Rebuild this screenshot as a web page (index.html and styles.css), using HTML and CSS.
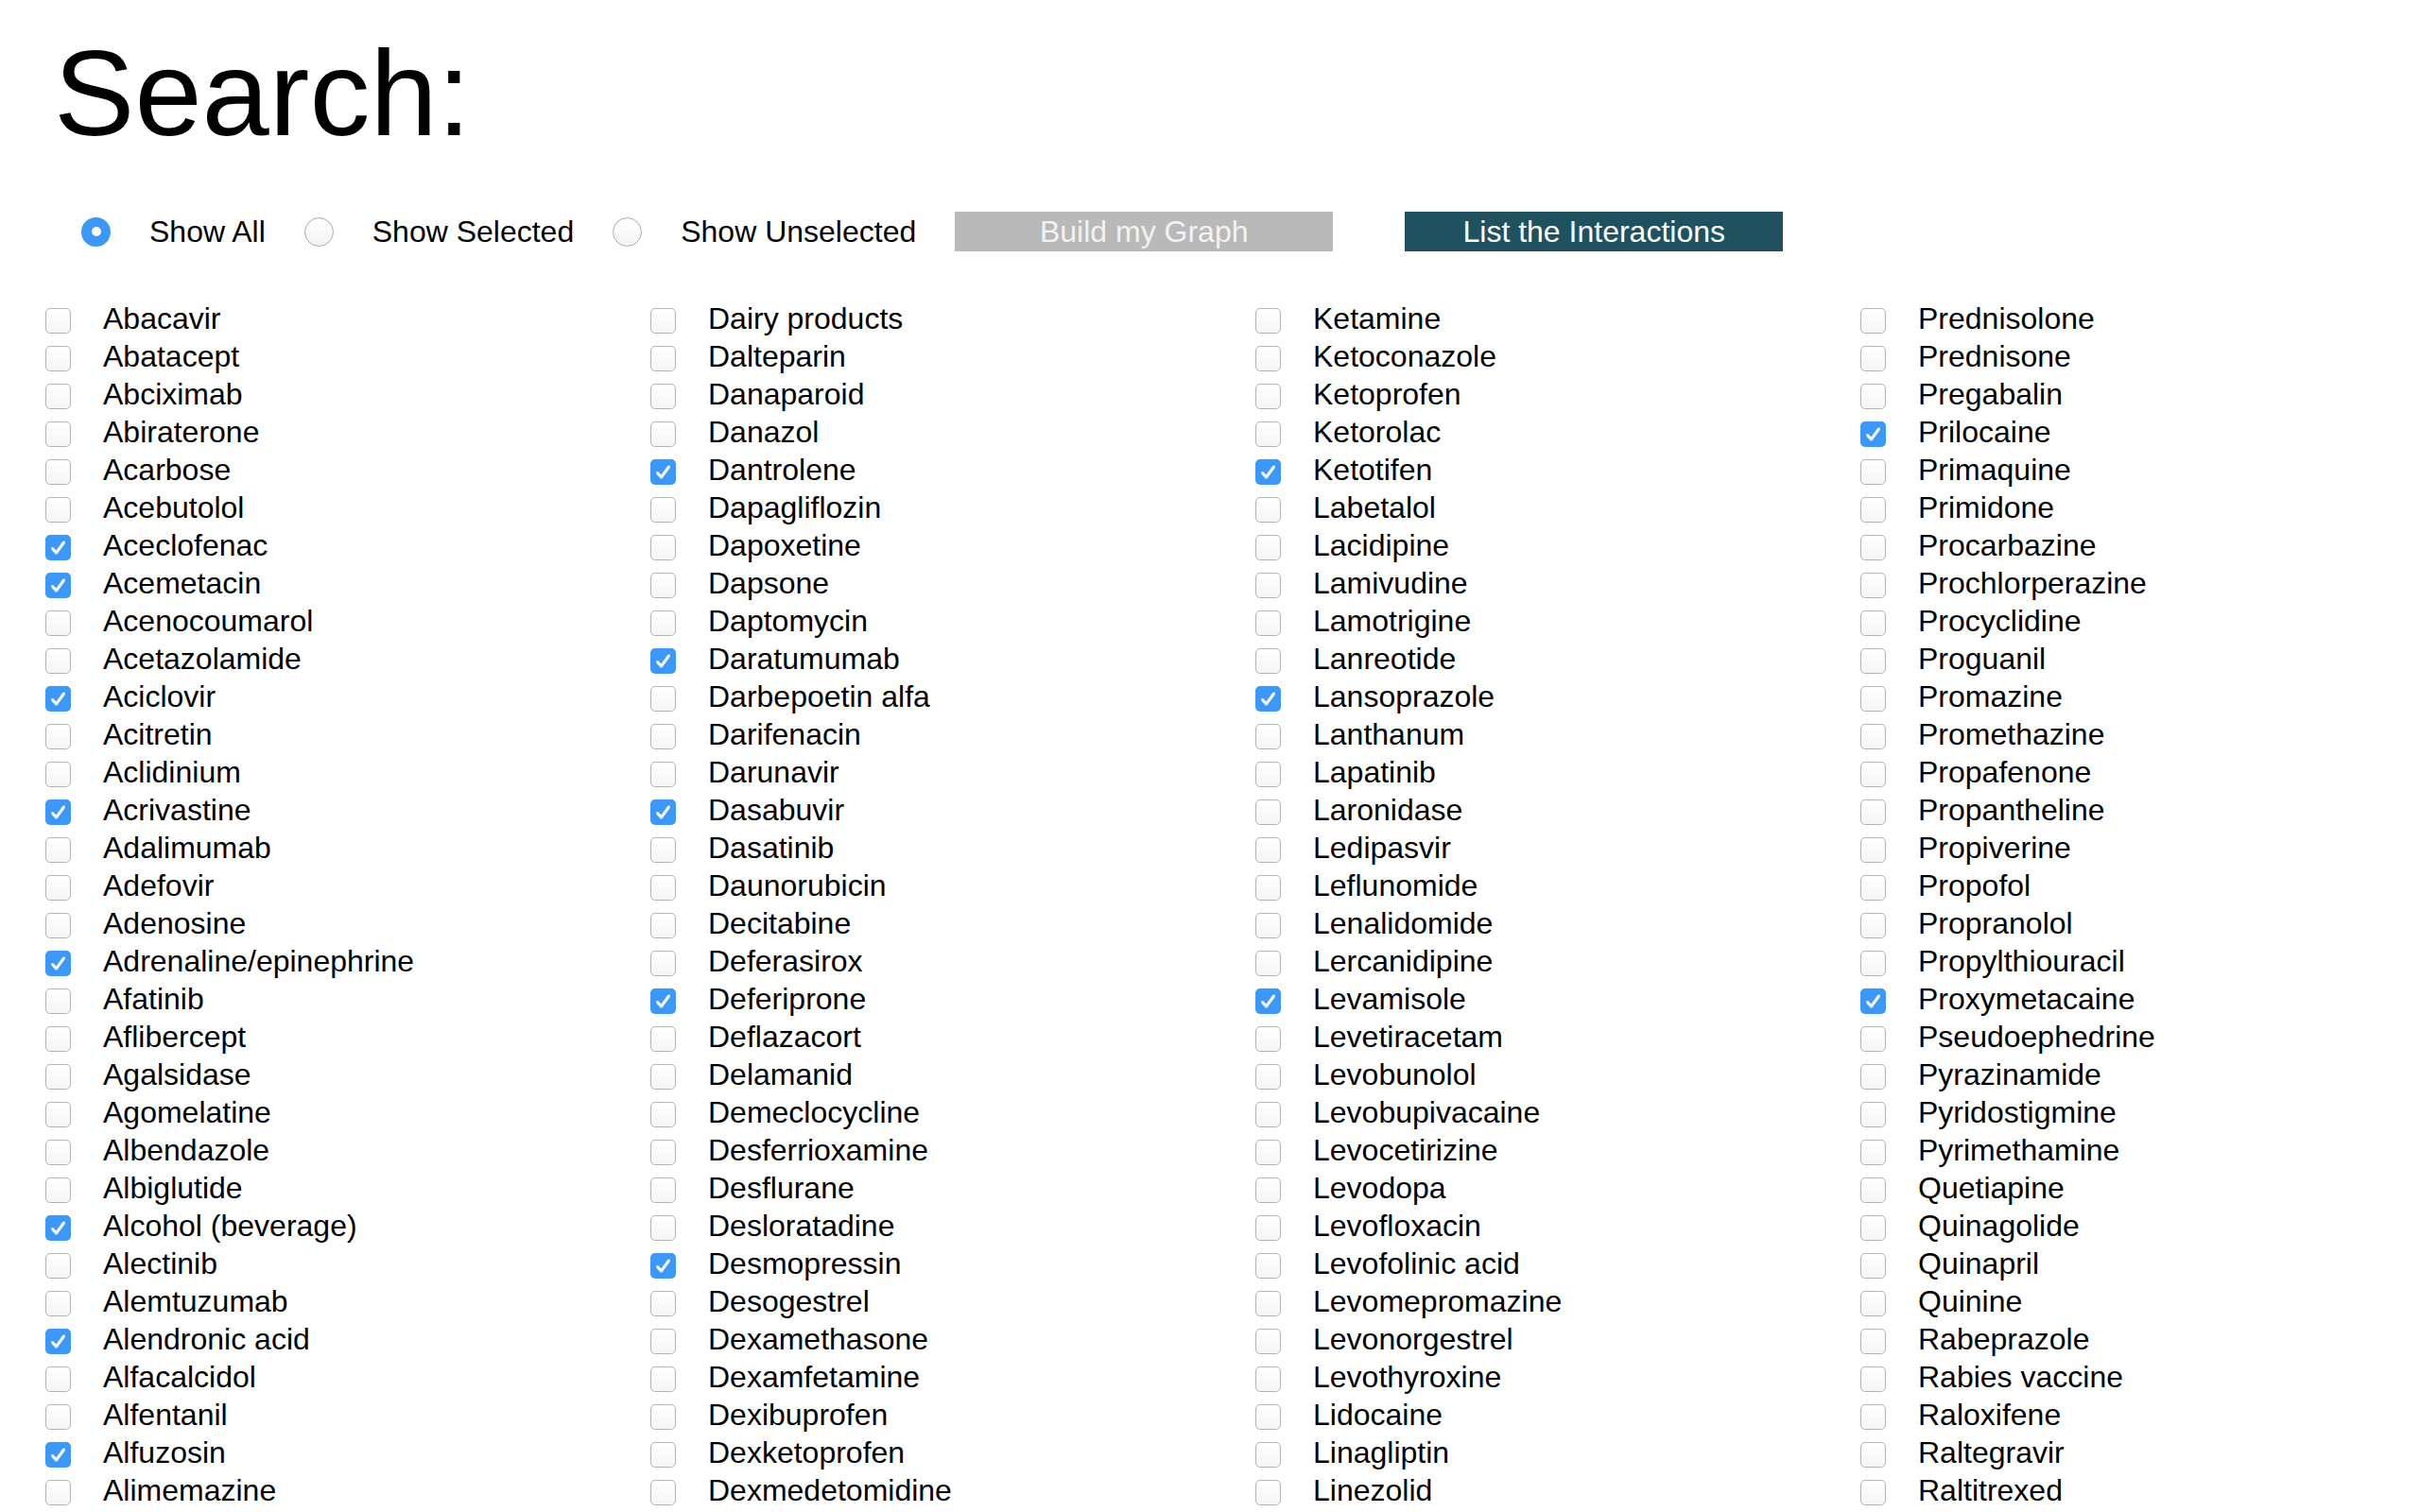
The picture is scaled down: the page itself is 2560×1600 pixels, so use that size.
FILE: index.html
```html
<!DOCTYPE html>
<html>
<head>
<meta charset="utf-8">
<title>Search</title>
<link rel="stylesheet" href="styles.css">
</head>
<body>
<h1 class="title">Search:</h1>
<div class="controls">
  <span class="radio on"></span><span class="rlabel">Show All</span>
  <span class="radio"></span><span class="rlabel">Show Selected</span>
  <span class="radio"></span><span class="rlabel">Show Unselected</span>
  <button class="btn btn-build">Build my Graph</button>
  <button class="btn btn-list">List the Interactions</button>
</div>
<div class="grid">
  <div class="col">
    <div class="item"><span class="box"></span><span class="name">Abacavir</span></div>
    <div class="item"><span class="box"></span><span class="name">Abatacept</span></div>
    <div class="item"><span class="box"></span><span class="name">Abciximab</span></div>
    <div class="item"><span class="box"></span><span class="name">Abiraterone</span></div>
    <div class="item"><span class="box"></span><span class="name">Acarbose</span></div>
    <div class="item"><span class="box"></span><span class="name">Acebutolol</span></div>
    <div class="item"><span class="box on"><svg viewBox="0 0 27 27"><polyline points="7.5,14.5 11.5,19 19.5,8"/></svg></span><span class="name">Aceclofenac</span></div>
    <div class="item"><span class="box on"><svg viewBox="0 0 27 27"><polyline points="7.5,14.5 11.5,19 19.5,8"/></svg></span><span class="name">Acemetacin</span></div>
    <div class="item"><span class="box"></span><span class="name">Acenocoumarol</span></div>
    <div class="item"><span class="box"></span><span class="name">Acetazolamide</span></div>
    <div class="item"><span class="box on"><svg viewBox="0 0 27 27"><polyline points="7.5,14.5 11.5,19 19.5,8"/></svg></span><span class="name">Aciclovir</span></div>
    <div class="item"><span class="box"></span><span class="name">Acitretin</span></div>
    <div class="item"><span class="box"></span><span class="name">Aclidinium</span></div>
    <div class="item"><span class="box on"><svg viewBox="0 0 27 27"><polyline points="7.5,14.5 11.5,19 19.5,8"/></svg></span><span class="name">Acrivastine</span></div>
    <div class="item"><span class="box"></span><span class="name">Adalimumab</span></div>
    <div class="item"><span class="box"></span><span class="name">Adefovir</span></div>
    <div class="item"><span class="box"></span><span class="name">Adenosine</span></div>
    <div class="item"><span class="box on"><svg viewBox="0 0 27 27"><polyline points="7.5,14.5 11.5,19 19.5,8"/></svg></span><span class="name">Adrenaline/epinephrine</span></div>
    <div class="item"><span class="box"></span><span class="name">Afatinib</span></div>
    <div class="item"><span class="box"></span><span class="name">Aflibercept</span></div>
    <div class="item"><span class="box"></span><span class="name">Agalsidase</span></div>
    <div class="item"><span class="box"></span><span class="name">Agomelatine</span></div>
    <div class="item"><span class="box"></span><span class="name">Albendazole</span></div>
    <div class="item"><span class="box"></span><span class="name">Albiglutide</span></div>
    <div class="item"><span class="box on"><svg viewBox="0 0 27 27"><polyline points="7.5,14.5 11.5,19 19.5,8"/></svg></span><span class="name">Alcohol (beverage)</span></div>
    <div class="item"><span class="box"></span><span class="name">Alectinib</span></div>
    <div class="item"><span class="box"></span><span class="name">Alemtuzumab</span></div>
    <div class="item"><span class="box on"><svg viewBox="0 0 27 27"><polyline points="7.5,14.5 11.5,19 19.5,8"/></svg></span><span class="name">Alendronic acid</span></div>
    <div class="item"><span class="box"></span><span class="name">Alfacalcidol</span></div>
    <div class="item"><span class="box"></span><span class="name">Alfentanil</span></div>
    <div class="item"><span class="box on"><svg viewBox="0 0 27 27"><polyline points="7.5,14.5 11.5,19 19.5,8"/></svg></span><span class="name">Alfuzosin</span></div>
    <div class="item"><span class="box"></span><span class="name">Alimemazine</span></div>
  </div>
  <div class="col">
    <div class="item"><span class="box"></span><span class="name">Dairy products</span></div>
    <div class="item"><span class="box"></span><span class="name">Dalteparin</span></div>
    <div class="item"><span class="box"></span><span class="name">Danaparoid</span></div>
    <div class="item"><span class="box"></span><span class="name">Danazol</span></div>
    <div class="item"><span class="box on"><svg viewBox="0 0 27 27"><polyline points="7.5,14.5 11.5,19 19.5,8"/></svg></span><span class="name">Dantrolene</span></div>
    <div class="item"><span class="box"></span><span class="name">Dapagliflozin</span></div>
    <div class="item"><span class="box"></span><span class="name">Dapoxetine</span></div>
    <div class="item"><span class="box"></span><span class="name">Dapsone</span></div>
    <div class="item"><span class="box"></span><span class="name">Daptomycin</span></div>
    <div class="item"><span class="box on"><svg viewBox="0 0 27 27"><polyline points="7.5,14.5 11.5,19 19.5,8"/></svg></span><span class="name">Daratumumab</span></div>
    <div class="item"><span class="box"></span><span class="name">Darbepoetin alfa</span></div>
    <div class="item"><span class="box"></span><span class="name">Darifenacin</span></div>
    <div class="item"><span class="box"></span><span class="name">Darunavir</span></div>
    <div class="item"><span class="box on"><svg viewBox="0 0 27 27"><polyline points="7.5,14.5 11.5,19 19.5,8"/></svg></span><span class="name">Dasabuvir</span></div>
    <div class="item"><span class="box"></span><span class="name">Dasatinib</span></div>
    <div class="item"><span class="box"></span><span class="name">Daunorubicin</span></div>
    <div class="item"><span class="box"></span><span class="name">Decitabine</span></div>
    <div class="item"><span class="box"></span><span class="name">Deferasirox</span></div>
    <div class="item"><span class="box on"><svg viewBox="0 0 27 27"><polyline points="7.5,14.5 11.5,19 19.5,8"/></svg></span><span class="name">Deferiprone</span></div>
    <div class="item"><span class="box"></span><span class="name">Deflazacort</span></div>
    <div class="item"><span class="box"></span><span class="name">Delamanid</span></div>
    <div class="item"><span class="box"></span><span class="name">Demeclocycline</span></div>
    <div class="item"><span class="box"></span><span class="name">Desferrioxamine</span></div>
    <div class="item"><span class="box"></span><span class="name">Desflurane</span></div>
    <div class="item"><span class="box"></span><span class="name">Desloratadine</span></div>
    <div class="item"><span class="box on"><svg viewBox="0 0 27 27"><polyline points="7.5,14.5 11.5,19 19.5,8"/></svg></span><span class="name">Desmopressin</span></div>
    <div class="item"><span class="box"></span><span class="name">Desogestrel</span></div>
    <div class="item"><span class="box"></span><span class="name">Dexamethasone</span></div>
    <div class="item"><span class="box"></span><span class="name">Dexamfetamine</span></div>
    <div class="item"><span class="box"></span><span class="name">Dexibuprofen</span></div>
    <div class="item"><span class="box"></span><span class="name">Dexketoprofen</span></div>
    <div class="item"><span class="box"></span><span class="name">Dexmedetomidine</span></div>
  </div>
  <div class="col">
    <div class="item"><span class="box"></span><span class="name">Ketamine</span></div>
    <div class="item"><span class="box"></span><span class="name">Ketoconazole</span></div>
    <div class="item"><span class="box"></span><span class="name">Ketoprofen</span></div>
    <div class="item"><span class="box"></span><span class="name">Ketorolac</span></div>
    <div class="item"><span class="box on"><svg viewBox="0 0 27 27"><polyline points="7.5,14.5 11.5,19 19.5,8"/></svg></span><span class="name">Ketotifen</span></div>
    <div class="item"><span class="box"></span><span class="name">Labetalol</span></div>
    <div class="item"><span class="box"></span><span class="name">Lacidipine</span></div>
    <div class="item"><span class="box"></span><span class="name">Lamivudine</span></div>
    <div class="item"><span class="box"></span><span class="name">Lamotrigine</span></div>
    <div class="item"><span class="box"></span><span class="name">Lanreotide</span></div>
    <div class="item"><span class="box on"><svg viewBox="0 0 27 27"><polyline points="7.5,14.5 11.5,19 19.5,8"/></svg></span><span class="name">Lansoprazole</span></div>
    <div class="item"><span class="box"></span><span class="name">Lanthanum</span></div>
    <div class="item"><span class="box"></span><span class="name">Lapatinib</span></div>
    <div class="item"><span class="box"></span><span class="name">Laronidase</span></div>
    <div class="item"><span class="box"></span><span class="name">Ledipasvir</span></div>
    <div class="item"><span class="box"></span><span class="name">Leflunomide</span></div>
    <div class="item"><span class="box"></span><span class="name">Lenalidomide</span></div>
    <div class="item"><span class="box"></span><span class="name">Lercanidipine</span></div>
    <div class="item"><span class="box on"><svg viewBox="0 0 27 27"><polyline points="7.5,14.5 11.5,19 19.5,8"/></svg></span><span class="name">Levamisole</span></div>
    <div class="item"><span class="box"></span><span class="name">Levetiracetam</span></div>
    <div class="item"><span class="box"></span><span class="name">Levobunolol</span></div>
    <div class="item"><span class="box"></span><span class="name">Levobupivacaine</span></div>
    <div class="item"><span class="box"></span><span class="name">Levocetirizine</span></div>
    <div class="item"><span class="box"></span><span class="name">Levodopa</span></div>
    <div class="item"><span class="box"></span><span class="name">Levofloxacin</span></div>
    <div class="item"><span class="box"></span><span class="name">Levofolinic acid</span></div>
    <div class="item"><span class="box"></span><span class="name">Levomepromazine</span></div>
    <div class="item"><span class="box"></span><span class="name">Levonorgestrel</span></div>
    <div class="item"><span class="box"></span><span class="name">Levothyroxine</span></div>
    <div class="item"><span class="box"></span><span class="name">Lidocaine</span></div>
    <div class="item"><span class="box"></span><span class="name">Linagliptin</span></div>
    <div class="item"><span class="box"></span><span class="name">Linezolid</span></div>
  </div>
  <div class="col">
    <div class="item"><span class="box"></span><span class="name">Prednisolone</span></div>
    <div class="item"><span class="box"></span><span class="name">Prednisone</span></div>
    <div class="item"><span class="box"></span><span class="name">Pregabalin</span></div>
    <div class="item"><span class="box on"><svg viewBox="0 0 27 27"><polyline points="7.5,14.5 11.5,19 19.5,8"/></svg></span><span class="name">Prilocaine</span></div>
    <div class="item"><span class="box"></span><span class="name">Primaquine</span></div>
    <div class="item"><span class="box"></span><span class="name">Primidone</span></div>
    <div class="item"><span class="box"></span><span class="name">Procarbazine</span></div>
    <div class="item"><span class="box"></span><span class="name">Prochlorperazine</span></div>
    <div class="item"><span class="box"></span><span class="name">Procyclidine</span></div>
    <div class="item"><span class="box"></span><span class="name">Proguanil</span></div>
    <div class="item"><span class="box"></span><span class="name">Promazine</span></div>
    <div class="item"><span class="box"></span><span class="name">Promethazine</span></div>
    <div class="item"><span class="box"></span><span class="name">Propafenone</span></div>
    <div class="item"><span class="box"></span><span class="name">Propantheline</span></div>
    <div class="item"><span class="box"></span><span class="name">Propiverine</span></div>
    <div class="item"><span class="box"></span><span class="name">Propofol</span></div>
    <div class="item"><span class="box"></span><span class="name">Propranolol</span></div>
    <div class="item"><span class="box"></span><span class="name">Propylthiouracil</span></div>
    <div class="item"><span class="box on"><svg viewBox="0 0 27 27"><polyline points="7.5,14.5 11.5,19 19.5,8"/></svg></span><span class="name">Proxymetacaine</span></div>
    <div class="item"><span class="box"></span><span class="name">Pseudoephedrine</span></div>
    <div class="item"><span class="box"></span><span class="name">Pyrazinamide</span></div>
    <div class="item"><span class="box"></span><span class="name">Pyridostigmine</span></div>
    <div class="item"><span class="box"></span><span class="name">Pyrimethamine</span></div>
    <div class="item"><span class="box"></span><span class="name">Quetiapine</span></div>
    <div class="item"><span class="box"></span><span class="name">Quinagolide</span></div>
    <div class="item"><span class="box"></span><span class="name">Quinapril</span></div>
    <div class="item"><span class="box"></span><span class="name">Quinine</span></div>
    <div class="item"><span class="box"></span><span class="name">Rabeprazole</span></div>
    <div class="item"><span class="box"></span><span class="name">Rabies vaccine</span></div>
    <div class="item"><span class="box"></span><span class="name">Raloxifene</span></div>
    <div class="item"><span class="box"></span><span class="name">Raltegravir</span></div>
    <div class="item"><span class="box"></span><span class="name">Raltitrexed</span></div>
  </div>
</div>
</body>
</html>
```
FILE: styles.css
```css
html, body {
  margin: 0;
  padding: 0;
  background: #ffffff;
}
body {
  font-family: "Liberation Sans", Arial, Helvetica, sans-serif;
  color: #000;
}
.title {
  margin: 0;
  padding: 35px 0 0 57px;
  font-size: 128px;
  line-height: 128px;
  font-weight: normal;
}
.controls {
  display: flex;
  align-items: center;
  height: 42px;
  margin-top: 61px;
  padding-left: 86px;
  font-size: 32px;
}
.radio {
  box-sizing: border-box;
  width: 31px;
  height: 31px;
  border-radius: 50%;
  border: 1px solid #aeaeae;
  background: linear-gradient(#ffffff, #f2f2f2);
  box-shadow: inset 0 1px 1px rgba(0,0,0,0.06);
  margin-right: 41px;
  flex: none;
  display: flex;
  align-items: center;
  justify-content: center;
}
.radio.on {
  border: none;
  background: #3d97f6;
  box-shadow: none;
}
.radio.on::after {
  content: "";
  width: 10px;
  height: 10px;
  border-radius: 50%;
  background: #fff;
}
.rlabel {
  margin-right: 41px;
  line-height: 40px;
  white-space: nowrap;
}
.btn {
  font-family: inherit;
  width: 400px;
  height: 42px;
  border: none;
  padding: 0;
  margin: 0;
  font-size: 32px;
  line-height: 40px;
  color: #fff;
  flex: none;
}
.btn-build {
  background: #b9b9b9;
  color: #f2f2f2;
  margin-right: 76px;
}
.btn-list {
  background: #1f525e;
}
.grid {
  display: grid;
  grid-template-columns: repeat(4, 640px);
  margin-top: 51px;
}
.col {
  padding-left: 48px;
}
.item {
  display: flex;
  align-items: center;
  height: 40px;
}
.box {
  box-sizing: border-box;
  width: 27px;
  height: 27px;
  border-radius: 5px;
  border: 1px solid #b3b3b3;
  background: linear-gradient(#ffffff, #f5f5f5);
  margin: 4px 34px 0 0;
  flex: none;
  display: flex;
}
.box.on {
  border: none;
  background: #3d97f6;
}
.box svg {
  width: 27px;
  height: 27px;
}
.box polyline {
  fill: none;
  stroke: #fff;
  stroke-width: 3;
  stroke-linecap: round;
  stroke-linejoin: round;
}
.name {
  font-size: 32px;
  line-height: 40px;
  white-space: nowrap;
}
```
